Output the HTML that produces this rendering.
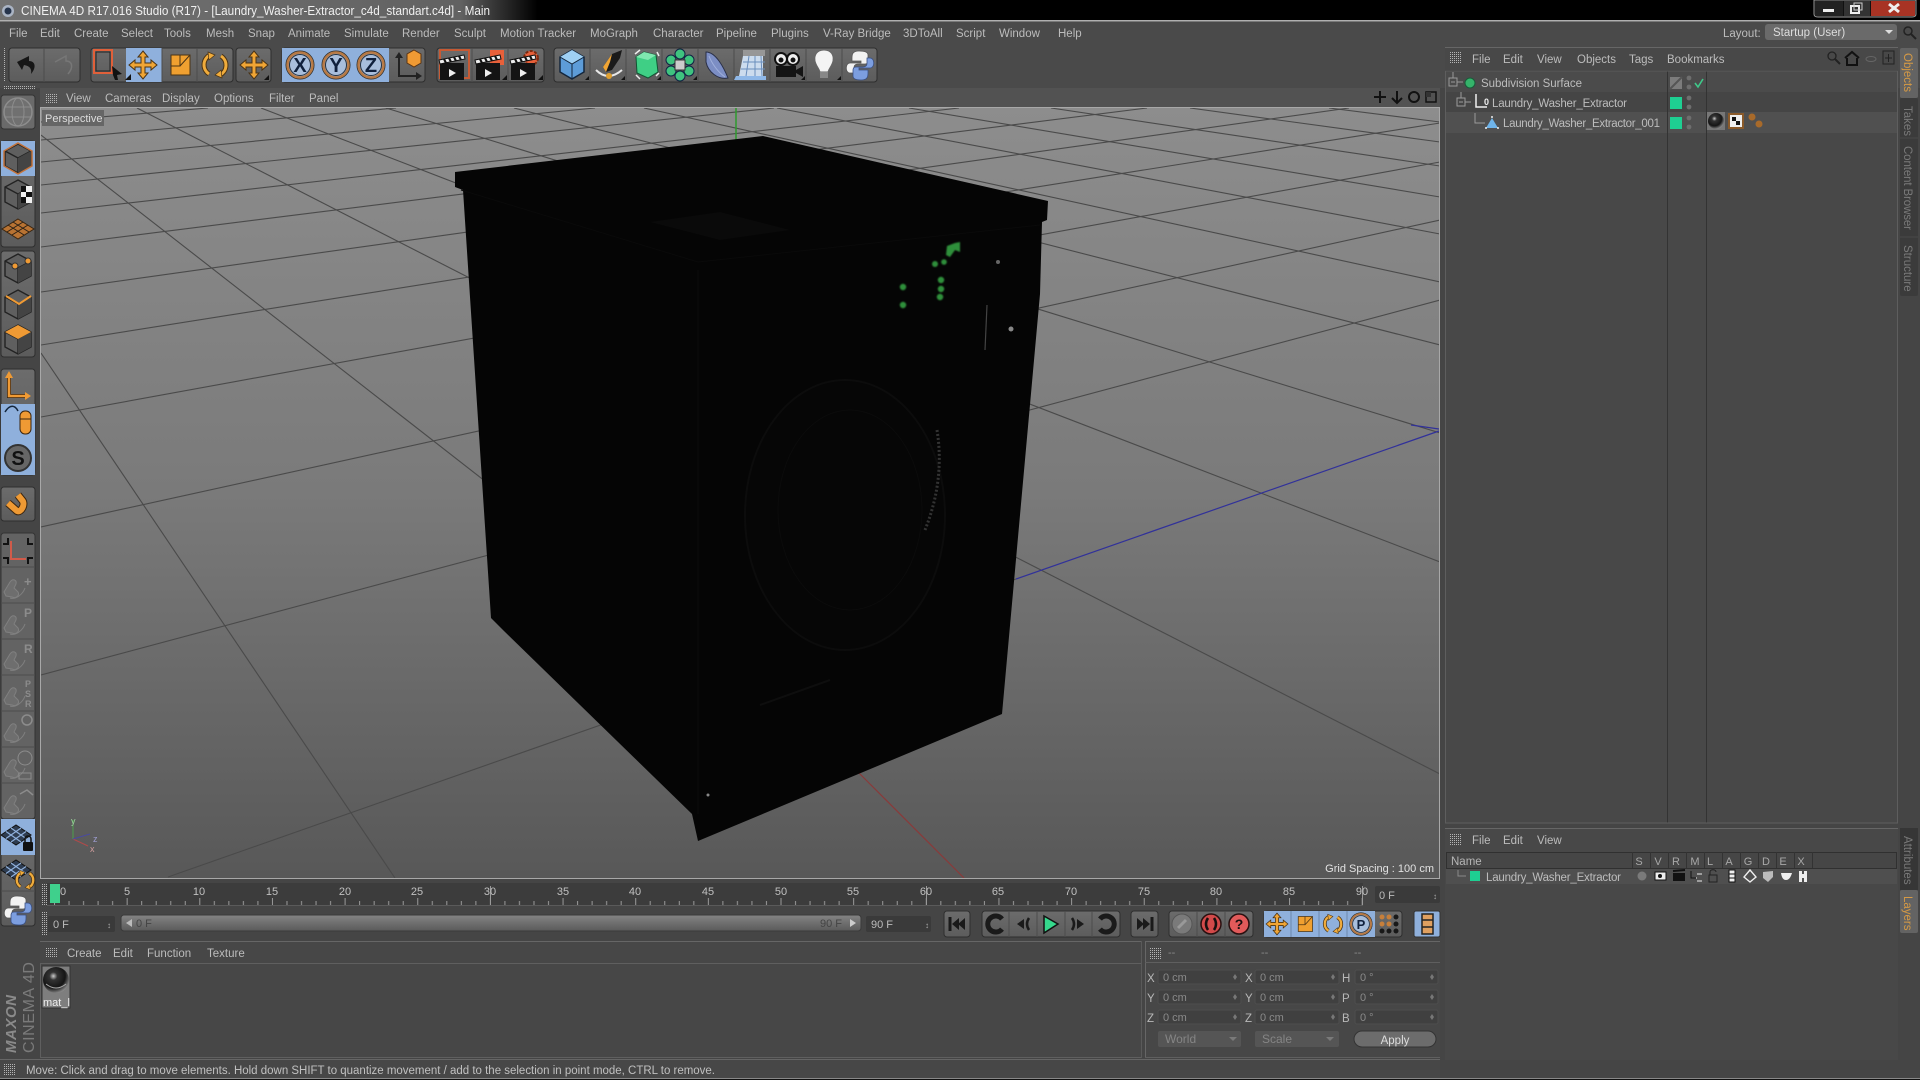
<!DOCTYPE html>
<html><head><meta charset="utf-8"><title>CINEMA 4D</title>
<style>
html,body{margin:0;padding:0;background:#454545;width:1920px;height:1080px;overflow:hidden}
svg{display:block;position:absolute;left:0;top:0;overflow:hidden}
text{font-family:"Liberation Sans",sans-serif;font-size:11px;fill:#c2c2c2}
.m text{fill:#bcbcbc;font-size:11.5px}
.d text{fill:#8a8a8a;font-size:11px}
.n text{fill:#c0c0c0;font-size:11px;text-anchor:middle}
.g line{stroke:#4a4a4a;stroke-width:1.1}
.b{fill:url(#btn);stroke:#2e2e2e;stroke-width:1}
.c{fill:#8fb0dc}
.s{stroke:#4c4c4c;stroke-width:1}
</style></head><body>
<svg width="1920" height="1080" viewBox="0 0 1920 1080" xmlns="http://www.w3.org/2000/svg">
<defs>
<linearGradient id="btn" x1="0" y1="0" x2="0" y2="1"><stop offset="0" stop-color="#6c6c6c"/><stop offset="1" stop-color="#5c5c5c"/></linearGradient>
<linearGradient id="vp" x1="0" y1="0" x2="0" y2="1"><stop offset="0" stop-color="#8d8d8d"/><stop offset=".5" stop-color="#7a7a7a"/><stop offset="1" stop-color="#585858"/></linearGradient>
<linearGradient id="ttl" x1="0" y1="0" x2="1" y2="0"><stop offset="0" stop-color="#727272"/><stop offset=".24" stop-color="#626262"/><stop offset=".255" stop-color="#3c3c3c"/><stop offset=".28" stop-color="#000"/><stop offset="1" stop-color="#000"/></linearGradient>
<linearGradient id="slid" x1="0" y1="0" x2="0" y2="1"><stop offset="0" stop-color="#848484"/><stop offset="1" stop-color="#5a5a5a"/></linearGradient>
<radialGradient id="ball" cx=".4" cy=".35" r=".7"><stop offset="0" stop-color="#ccc"/><stop offset=".22" stop-color="#333"/><stop offset=".65" stop-color="#151515"/><stop offset="1" stop-color="#999"/></radialGradient>
<filter id="soft" x="-20%" y="-20%" width="140%" height="140%"><feGaussianBlur stdDeviation=".8"/></filter>
<pattern id="grip" width="2" height="2" patternUnits="userSpaceOnUse"><rect width="1" height="1" fill="#b5b5b5"/></pattern>
<pattern id="ticks" x="54" y="880" width="72.65" height="30" patternUnits="userSpaceOnUse">
<rect x="0" y="18" width="1" height="7" fill="#9a9a9a"/><rect x="14.53" y="21" width="1" height="4" fill="#9a9a9a"/><rect x="29.06" y="21" width="1" height="4" fill="#9a9a9a"/><rect x="43.59" y="21" width="1" height="4" fill="#9a9a9a"/><rect x="58.12" y="21" width="1" height="4" fill="#9a9a9a"/></pattern>
<clipPath id="vc"><rect x="41" y="108" width="1399" height="770"/></clipPath>
<g id="mv"><polygon points="0,-14 5,-8 2,-8 2,-2 8,-2 8,-5 14,0 8,5 8,2 2,2 2,8 5,8 0,14 -5,8 -2,8 -2,2 -8,2 -8,5 -14,0 -8,-5 -8,-2 -2,-2 -2,-8 -5,-8" fill="#f0a535" stroke="#4a3315" stroke-width="1"/></g>
<g id="sc"><rect x="-9" y="-10" width="19" height="20" fill="#f0a030" stroke="#4a3315"/><path d="M-9 1H0V-10M0 1L10-10" fill="none" stroke="#4a3315"/></g>
<g id="ro"><path d="M-5-10A11 11 0 0 0-6 9M5 10A11 11 0 0 0 6-9" fill="none" stroke="#4a3315" stroke-width="5"/><path d="M-5-10A11 11 0 0 0-6 9M5 10A11 11 0 0 0 6-9" fill="none" stroke="#f0ac3c" stroke-width="3"/><path d="M-7-13L0-10-6-5ZM7 13L0 10 6 5Z" fill="#f0ac3c" stroke="#4a3315" stroke-width=".7"/></g>
<g id="ring"><circle r="14" fill="#8fb0dc" stroke="#30302e" stroke-width="1"/><circle r="12.5" fill="none" stroke="#b87a45" stroke-width="2.5"/><circle r="10.5" fill="#a8bedc" stroke="#26303c" stroke-width="1"/></g>
<g id="cube"><polygon points="0,-14 13,-7 13,8 0,15 -13,8 -13,-7" fill="#5f5f5f" stroke="#222" stroke-width="1.4"/><path d="M-13-7L0 0 13-7M0 0V15" fill="none" stroke="#222" stroke-width="1.4"/><polygon points="0,0 13,-7 13,8 0,15" fill="#444"/></g>
<g id="clap"><rect x="-12" y="-3" width="24" height="17" fill="#141414"/><path d="M-13-6L12-11 13-7-12-2Z" fill="#eee" stroke="#111"/><path d="M-8-7l2 4M-3-8l2 4M2-9l2 4M7-10l2 4" stroke="#111" stroke-width="2"/><polygon points="-3,3 4,7 -3,11" fill="#eee"/></g>
<g id="hand"><path d="M-10 6L-4-4C-1-8 3-6 2-2L0 2 4 6C6 9 2 13-2 11L-8 10Z" fill="#6e6e6e" stroke="#808080" stroke-width="1"/><path d="M-4 12C2 14 9 8 11 2" fill="none" stroke="#808080"/></g>
<g id="plane"><polygon points="-15,2 0,-8 15,2 0,12" fill="#2e3c50" stroke="#111"/><path d="M-10-1.5L5 9M-5-5L10 5.5M10-1.5L-5 9M5-5L-10 5.5" stroke="#8fb0dc" stroke-width="1.2"/></g>
<g id="py"><path d="M-1-14C-9-14-8-9-8-4H1V-2H-10C-15-2-15 8-10 8H-6V3C-6-1-3-1 0-1H5C8-1 8-3 8-5V-10C8-13 4-14-1-14Z" fill="#f2f2f2" stroke="#555" stroke-width=".8"/><path d="M1 15C9 15 8 10 8 5H-1V3H10C15 3 15-7 10-7H7V-2C7 2 4 2 1 2H-4C-7 2-7 4-7 6V11C-7 14-3 15 1 15Z" fill="#7c9ee0" stroke="#3a4f80" stroke-width=".8"/></g>
</defs>

<rect width="1920" height="1080" fill="#454545"/>

<!-- title bar -->
<rect width="1920" height="21" fill="url(#ttl)"/>
<rect y="20" width="1920" height="1.5" fill="#b0b0b0"/>
<rect y="22" width="1920" height="66" fill="#4a4a4a"/>
<circle cx="8" cy="11" r="6" fill="#aab4c4"/><circle cx="8" cy="11" r="3.5" fill="#26344c"/>
<text x="21" y="15" style="font-size:12.5px;fill:#f0f0f0" textLength="469" lengthAdjust="spacingAndGlyphs">CINEMA 4D R17.016 Studio (R17) - [Laundry_Washer-Extractor_c4d_standart.c4d] - Main</text>
<!-- window buttons -->
<path d="M1814 0V14Q1814 17 1818 17H1912Q1916 17 1916 14V0Z" fill="#111" stroke="#999"/>
<rect x="1815" y="1" width="28" height="15" fill="#222"/><rect x="1844" y="1" width="26" height="15" fill="#333"/>
<rect x="1871" y="1" width="44" height="15" fill="#a83324"/>
<rect x="1823" y="9" width="11" height="3" fill="#eee"/>
<rect x="1851" y="6" width="8" height="7" fill="none" stroke="#eee" stroke-width="2"/><rect x="1854" y="3" width="8" height="7" fill="none" stroke="#ccc" stroke-width="1"/>
<path d="M1889 4L1899 12M1899 4L1889 12" stroke="#eee" stroke-width="3"/>

<!-- main menu -->
<g class="m">
<text x="9" y="37">File</text><text x="40" y="37">Edit</text><text x="74" y="37">Create</text><text x="121" y="37">Select</text><text x="164" y="37">Tools</text><text x="206" y="37">Mesh</text><text x="248" y="37">Snap</text><text x="288" y="37">Animate</text><text x="344" y="37">Simulate</text><text x="402" y="37">Render</text><text x="454" y="37">Sculpt</text><text x="500" y="37">Motion Tracker</text><text x="590" y="37">MoGraph</text><text x="653" y="37">Character</text><text x="716" y="37">Pipeline</text><text x="771" y="37">Plugins</text><text x="823" y="37">V-Ray Bridge</text><text x="903" y="37">3DToAll</text><text x="956" y="37">Script</text><text x="999" y="37">Window</text><text x="1058" y="37">Help</text>
<text x="1723" y="37">Layout:</text>
</g>
<rect x="1765" y="24" width="132" height="16" rx="3" fill="#6a6a6a"/><text x="1773" y="36" style="font-size:11.5px;fill:#ddd">Startup (User)</text><polygon points="1885,30 1893,30 1889,34" fill="#ddd"/>
<circle cx="1908" cy="31" r="4" fill="none" stroke="#222" stroke-width="1.5"/><path d="M1911 34L1916 39" stroke="#222" stroke-width="2"/>

<!-- toolbar -->
<rect x="3" y="48" width="3" height="34" fill="url(#grip)"/>
<rect x="9" y="48" width="71" height="34" rx="3" class="b"/>
<path d="M44 48V82" class="s"/>
<path d="M17 62L29 56V61C35 61 37 67 31 74 32 69 30 66 24 65L22 70Z" fill="#161616"/>
<path d="M55 62L66 56V61C72 61 74 67 68 74" fill="none" stroke="#777" stroke-width="1.5"/>

<rect x="91" y="48" width="142" height="34" rx="3" class="b"/>
<rect x="126" y="48" width="36" height="34" class="c"/>
<path d="M162 48V82M197 48V82" class="s"/>
<rect x="94" y="50" width="18" height="23" fill="none" stroke="#e0603a" stroke-width="2"/><rect x="96" y="52" width="14" height="19" fill="none" stroke="#222"/>
<polygon points="112,66 122,74 117,75 118,80 115,80 113,75" fill="#111"/><polygon points="125,80 131,80 131,74" fill="#111"/>
<use href="#mv" x="143" y="65"/><use href="#sc" x="180" y="65"/><use href="#ro" x="215" y="65"/>
<rect x="236" y="48" width="35" height="34" rx="3" class="b"/><use href="#mv" x="254" y="65"/><polygon points="264,80 269,80 269,75" fill="#111"/>

<rect x="282" y="48" width="143" height="34" rx="3" class="b"/>
<rect x="282" y="48" width="107" height="34" class="c"/>
<use href="#ring" x="300" y="65"/><use href="#ring" x="336" y="65"/><use href="#ring" x="371" y="65"/>
<text x="300" y="72" text-anchor="middle" style="font-size:20px;font-weight:bold;fill:#10203c">X</text>
<text x="336" y="72" text-anchor="middle" style="font-size:20px;font-weight:bold;fill:#10203c">Y</text>
<text x="371" y="72" text-anchor="middle" style="font-size:20px;font-weight:bold;fill:#10203c">Z</text>
<path d="M399 56V76H418" fill="none" stroke="#222" stroke-width="2"/><polygon points="399,52 395,58 403,58" fill="#222"/><polygon points="422,76 416,72 416,80" fill="#222"/>
<polygon points="414,50 421,54 421,63 414,67 407,63 407,54" fill="#ef9a34" stroke="#5a3515"/>

<rect x="437" y="48" width="107" height="34" rx="3" class="b"/>
<path d="M472 48V82M508 48V82" class="s"/>
<rect x="440" y="50" width="29" height="28" fill="none" stroke="#c75a34" stroke-width="2"/>
<use href="#clap" x="452" y="66"/>
<rect x="490" y="50" width="14" height="15" fill="#e8603a"/><use href="#clap" x="488" y="66"/>
<circle cx="531" cy="58" r="7" fill="#e8603a" stroke="#7a2a10" stroke-width="2" stroke-dasharray="3 1.5"/><use href="#clap" x="523" y="66"/>
<polygon points="502,80 507,80 507,75" fill="#111"/><polygon points="538,80 543,80 543,75" fill="#111"/>

<rect x="554" y="48" width="323" height="34" rx="3" class="b"/>
<path d="M590 48V82M626 48V82M662 48V82M698 48V82M734 48V82M770 48V82M806 48V82M842 48V82" class="s"/>
<polygon points="572,50 584,57 584,72 572,79 560,72 560,57" fill="#5d9cd8" stroke="#14263c" stroke-width="1.5"/><polygon points="572,50 584,57 572,64 560,57" fill="#9fd0f4"/><path d="M560 57L572 64 584 57M572 64V79" fill="none" stroke="#14263c"/>
<polygon points="622,50 612,54 603,67 606,72 612,70 620,58" fill="#1a1a1a"/><polygon points="612,54 603,67 606,72 610,62" fill="#f0a535"/><path d="M596 70Q608 82 622 70" fill="none" stroke="#e8e8e8" stroke-width="2"/><circle cx="609" cy="76" r="3" fill="#e0a030"/>
<polygon points="644,52 656,55 658,72 648,78 637,73 636,57" fill="#3fcf85" stroke="#153"/><polygon points="644,52 656,55 648,60 636,57" fill="#7fe8b0"/><path d="M640 50l-5 4M657 52l2 4M636 75l4 4M656 76l3-3" stroke="#eee" stroke-width="1.5"/>
<g fill="#3fc37f" stroke="#124"><circle cx="680" cy="54" r="5"/><circle cx="671" cy="60" r="5"/><circle cx="689" cy="60" r="5"/><circle cx="671" cy="71" r="5"/><circle cx="689" cy="71" r="5"/><circle cx="680" cy="76" r="5"/></g><rect x="675" y="60" width="10" height="10" fill="#ccc" stroke="#333"/>
<path d="M706 52C716 52 724 68 728 78 718 80 708 72 706 62Z" fill="#7c8ec4" stroke="#2a3048"/><path d="M709 56C712 64 718 72 725 77" fill="none" stroke="#a0b0dc"/>
<polygon points="743,56 763,56 763,76 739,76" fill="#ccdcee"/><polygon points="736,76 766,76 766,80 734,80" fill="#8fb8e8"/><rect x="743" y="50" width="22" height="6" fill="#ddd" opacity=".4"/><path d="M743 62H765M741 69H765M749 56L746 76M755 56V76M761 56L762 76" stroke="#6a8ebc"/>
<circle cx="781" cy="59" r="6" fill="#eee" stroke="#111" stroke-width="2"/><circle cx="793" cy="59" r="6" fill="#eee" stroke="#111" stroke-width="2"/><circle cx="781" cy="60" r="2.5" fill="#111"/><circle cx="793" cy="60" r="2.5" fill="#111"/><rect x="776" y="66" width="20" height="11" fill="#141414"/><polygon points="796,70 803,66 803,77 796,73" fill="#141414"/>
<path d="M824 50C817 50 814 55 815 61 816 66 819 68 820 72H828C829 68 832 66 833 61 834 55 831 50 824 50Z" fill="#f4f4f4" stroke="#666"/><rect x="820" y="72" width="8" height="6" fill="#888"/>
<use href="#py" x="860" y="65"/>
<polygon points="585,80 589,80 589,76" fill="#111"/><polygon points="621,80 625,80 625,76" fill="#111"/><polygon points="657,80 661,80 661,76" fill="#111"/><polygon points="693,80 697,80 697,76" fill="#111"/><polygon points="801,80 805,80 805,76" fill="#111"/><polygon points="837,80 841,80 841,76" fill="#111"/>

<!-- left column globe -->
<rect x="1" y="95" width="34" height="34" rx="3" fill="#6a6a6a" stroke="#333"/>
<circle cx="18" cy="112" r="14" fill="#707070" stroke="#8d8d8d" stroke-width="1.5"/><ellipse cx="18" cy="112" rx="6" ry="14" fill="none" stroke="#8d8d8d"/><path d="M5 107H31M5 117H31" stroke="#8d8d8d"/>
<rect x="3" y="86" width="32" height="4" fill="url(#grip)"/>

<!-- viewport -->
<rect x="40" y="88" width="1400" height="20" fill="#525252"/>
<rect x="46" y="93" width="12" height="11" fill="url(#grip)"/>
<g class="m"><text x="66" y="102">View</text><text x="105" y="102">Cameras</text><text x="162" y="102">Display</text><text x="214" y="102">Options</text><text x="269" y="102">Filter</text><text x="309" y="102">Panel</text></g>
<path d="M1380 91V103M1374 97H1386" stroke="#111" stroke-width="2"/>
<path d="M1397 91V102M1392 98L1397 103 1402 98" stroke="#111" stroke-width="2" fill="none"/>
<circle cx="1414" cy="97" r="5" fill="none" stroke="#111" stroke-width="2"/>
<rect x="1426" y="92" width="10" height="10" fill="none" stroke="#111" stroke-width="1.5"/><rect x="1426" y="92" width="5" height="5" fill="#333"/>
<rect x="41" y="108" width="1399" height="770" fill="url(#vp)"/>
<g clip-path="url(#vc)">
<g class="g">
<line x1="41" y1="353" x2="395" y2="878"/>
<line x1="41" y1="135" x2="857" y2="771"/>
<line x1="137" y1="108" x2="1440" y2="774"/>
<line x1="261" y1="108" x2="1440" y2="562"/>
<line x1="386" y1="108" x2="1440" y2="433"/>
<line x1="514" y1="108" x2="1440" y2="345"/>
<line x1="644" y1="108" x2="1440" y2="282"/>
<line x1="777" y1="108" x2="1440" y2="234"/>
<line x1="909" y1="108" x2="1440" y2="197"/>
<line x1="1051" y1="108" x2="1440" y2="166"/>
<line x1="1190" y1="108" x2="1440" y2="142"/>
<line x1="1329" y1="108" x2="1440" y2="122"/>
<line x1="41" y1="122" x2="208" y2="108"/>
<line x1="41" y1="140" x2="396" y2="108"/>
<line x1="41" y1="162" x2="595" y2="108"/>
<line x1="41" y1="185" x2="774" y2="108"/>
<line x1="41" y1="213" x2="959" y2="108"/>
<line x1="41" y1="247" x2="1147" y2="108"/>
<line x1="41" y1="292" x2="1349" y2="108"/>
<line x1="41" y1="345" x2="1440" y2="123"/>
<line x1="41" y1="417" x2="1440" y2="162"/>
<line x1="41" y1="527" x2="1440" y2="220"/>
<line x1="41" y1="675" x2="1440" y2="300"/>
<line x1="168" y1="877" x2="1016" y2="579"/>
</g>
<path d="M1016 579L1439 431M1411 425L1439 429" stroke="#31319a" stroke-width="1.2" fill="none"/>
<path d="M857 771L964 878" stroke="#8a3a3a" stroke-width="1.2"/>
<path d="M736 108V184" stroke="#2f9a2f" stroke-width="1.5"/>
<!-- washer -->
<polygon points="455,172 763,136 1048,201 1047,220 1042,222 1040,294 1002,714 698,841 692,814 504,631 491,618 463,190 455,187" fill="#050505"/>
<polygon points="650,222 720,212 790,230 720,240" fill="#0a0a0a"/>
<path d="M698 270V814M461 190L698 262 1040 225" stroke="#0a0a0a" fill="none"/>
<ellipse cx="845" cy="515" rx="100" ry="135" fill="#060606" stroke="#0c0c0c" stroke-width="2"/>
<ellipse cx="850" cy="510" rx="72" ry="100" fill="none" stroke="#0b0b0b"/>
<path d="M937 430Q945 480 925 530" stroke="#333" stroke-width="3" stroke-dasharray="2 2" fill="none"/>
<path d="M760 705L830 680" stroke="#0e0e0e" stroke-width="2"/>
<g fill="#2f8f3a" filter="url(#soft)"><path d="M947 246L955 243 960 242 960 252 955 250 950 257 946 255Z"/><circle cx="935" cy="264" r="3"/><circle cx="944" cy="262" r="2.8"/><circle cx="941" cy="280" r="3.2"/><circle cx="941" cy="289" r="3.2"/><circle cx="940" cy="297" r="3.2"/><circle cx="903" cy="287" r="3.2"/><circle cx="903" cy="305" r="3.2"/></g>
<circle cx="998" cy="262" r="2" fill="#666"/><circle cx="1011" cy="329" r="2.5" fill="#888"/><path d="M987 305L985 350" stroke="#444" stroke-width="1.2"/><circle cx="708" cy="795" r="1.5" fill="#888"/>
<!-- gizmo -->
<path d="M73 839V820" stroke="#4ba04b"/><path d="M73 839L88 846" stroke="#b04a4a"/><path d="M73 839L90 834" stroke="#4a4aa0"/>
<text x="71" y="824" style="font-size:9px;fill:#9ccf9c">y</text><text x="90" y="852" style="font-size:9px;fill:#cf9c9c">x</text><text x="93" y="842" style="font-size:9px;fill:#9c9ccf">z</text>
</g>
<rect x="40.5" y="107.5" width="1399" height="771" fill="none" stroke="#a8a8a8"/>
<rect x="42" y="110" width="62" height="16" fill="#666"/><text x="45" y="122" style="font-size:11px;fill:#ddd">Perspective</text>
<text x="1434" y="872" text-anchor="end" style="font-size:11px;fill:#e2e2e2">Grid Spacing : 100 cm</text>

<!-- left toolbar -->
<rect x="1" y="141" width="34" height="106" rx="3" class="b"/><rect x="1" y="141" width="34" height="35" class="c"/>
<use href="#cube" x="18" y="158"/><polygon points="18,143 32,151 32,166 18,174 4,166 4,151" fill="none" stroke="#c4733a" stroke-width="1.5"/>
<use href="#cube" x="18" y="194"/><rect x="21" y="186" width="11" height="17" fill="#f2f2f2"/><path d="M21 186h5v6h-5zM26 192h6v5h-6zM21 197h5v6h-5z" fill="#111"/>
<polygon points="18,219 34,229 18,239 2,229" fill="#b87333" stroke="#3a2510"/><path d="M8 225L24 235M13 222L29 232M28 225L12 235M23 222L7 232" stroke="#2a2015"/>
<rect x="1" y="251" width="34" height="106" rx="3" class="b"/>
<use href="#cube" x="18" y="268"/><circle cx="15" cy="266" r="3" fill="#ef9a34" stroke="#333"/><circle cx="28" cy="261" r="3" fill="#ef9a34" stroke="#333"/>
<use href="#cube" x="18" y="304"/><path d="M6 296L19 304 31 296" stroke="#ef9a34" stroke-width="2" fill="none"/>
<use href="#cube" x="18" y="339"/><polygon points="18,325 31,332 18,339 5,332" fill="#ef9a34"/>
<rect x="1" y="369" width="34" height="106" rx="3" class="b"/><rect x="1" y="404" width="34" height="71" class="c"/>
<path d="M9 376V396H28" fill="none" stroke="#3a2510" stroke-width="4"/><path d="M9 376V396H28" fill="none" stroke="#ef9a34" stroke-width="2.5"/><polygon points="9,371 5,378 13,378" fill="#ef9a34"/><polygon points="31,396 25,392 25,400" fill="#ef9a34"/>
<path d="M5 412C10 404 15 405 18 411" fill="none" stroke="#14263c" stroke-width="1.5"/><rect x="20" y="411" width="11" height="23" rx="5" fill="#ef9a34" stroke="#3a2510"/><path d="M20 419H31" stroke="#3a2510"/>
<circle cx="18" cy="458" r="13" fill="#666" stroke="#333" stroke-width="2"/><text x="18" y="465" text-anchor="middle" style="font-size:20px;font-weight:bold;fill:#111">S</text>
<rect x="1" y="487" width="34" height="34" rx="3" class="b"/>
<path d="M8 503L17 511C21 513 26 504 22 500L18 495" fill="none" stroke="#3a2510" stroke-width="8"/><path d="M8 503L17 511C21 513 26 504 22 500L18 495" fill="none" stroke="#ef9a34" stroke-width="6"/>
<rect x="1" y="533" width="34" height="286" rx="3" fill="#636363" stroke="#333"/>
<path d="M8 538V544H3M28 538V544H33M3 558H8V564M33 558H28V564" stroke="#111" stroke-width="2" fill="none"/>
<path d="M11 541V559H26" fill="none" stroke="#d05b4a" stroke-width="2"/>
<path d="M1 567H35M1 603H35M1 639H35M1 675H35M1 711H35M1 747H35M1 783H35" class="s"/>
<use href="#hand" x="14" y="586"/><use href="#hand" x="14" y="622"/><use href="#hand" x="14" y="658"/><use href="#hand" x="14" y="694"/><use href="#hand" x="14" y="730"/><use href="#hand" x="14" y="766"/><use href="#hand" x="14" y="802"/>
<text x="24" y="586" style="font-size:13px;fill:#8c8c8c;font-weight:bold">+</text><text x="24" y="617" style="font-size:12px;fill:#8c8c8c;font-weight:bold">P</text><text x="24" y="653" style="font-size:12px;fill:#8c8c8c;font-weight:bold">R</text><text x="25" y="687" style="font-size:9px;fill:#8c8c8c;font-weight:bold">P</text><text x="25" y="697" style="font-size:9px;fill:#8c8c8c;font-weight:bold">S</text><text x="25" y="707" style="font-size:9px;fill:#8c8c8c;font-weight:bold">R</text>
<circle cx="27" cy="720" r="5" fill="none" stroke="#8c8c8c" stroke-width="1.5"/>
<circle cx="25" cy="758" r="7" fill="none" stroke="#8c8c8c"/><rect x="19" y="773" width="12" height="6" fill="none" stroke="#8c8c8c"/>
<path d="M20 794L27 790 33 795" fill="none" stroke="#8c8c8c" stroke-width="1.5"/>
<rect x="1" y="819" width="34" height="107" rx="3" class="b"/><rect x="1" y="819" width="34" height="36" class="c"/>
<use href="#plane" x="16" y="833"/><rect x="23" y="842" width="10" height="9" rx="1" fill="#111"/><path d="M25 842V839C25 835 31 835 31 839V842" fill="none" stroke="#111" stroke-width="1.5"/>
<use href="#plane" x="16" y="868"/><g transform="translate(25 880) scale(.75)"><use href="#ro"/></g>
<use href="#py" x="18" y="910"/>
<path d="M1 891H35" class="s"/>

<!-- logo -->
<text transform="translate(16 1053) rotate(-90)" style="font-size:15px;font-weight:bold;font-style:italic;fill:#8a8a8a" textLength="58">MAXON</text>
<text transform="translate(34 1053) rotate(-90)" style="font-size:16px;fill:#7a7a7a" textLength="91">CINEMA 4D</text>

<!-- timeline -->
<rect x="40" y="880" width="1400" height="60" fill="#454545"/>
<rect x="41" y="884" width="6" height="22" fill="url(#grip)"/>
<rect x="47" y="883" width="1316" height="23" fill="#3c3c3c"/>
<rect x="47" y="905" width="1316" height="1" fill="#5a5a5a"/>
<rect x="47" y="880" width="1316" height="26" fill="url(#ticks)"/>
<path d="M490.500 886V905M926.500 886V905M1362.500 886V905" stroke="#9a9a9a"/>
<rect x="50" y="884" width="10" height="19" fill="#3fd08c"/>
<g class="n"><text x="63" y="895">0</text><text x="127" y="895">5</text><text x="199" y="895">10</text><text x="272" y="895">15</text><text x="345" y="895">20</text><text x="417" y="895">25</text><text x="490" y="895">30</text><text x="563" y="895">35</text><text x="635" y="895">40</text><text x="708" y="895">45</text><text x="781" y="895">50</text><text x="853" y="895">55</text><text x="926" y="895">60</text><text x="998" y="895">65</text><text x="1071" y="895">70</text><text x="1144" y="895">75</text><text x="1216" y="895">80</text><text x="1289" y="895">85</text><text x="1362" y="895">90</text></g>
<rect x="1375" y="886" width="65" height="17" rx="2" fill="#3a3a3a"/><text x="1379" y="899" style="fill:#bbb">0 F</text><text x="1433" y="899" style="font-size:8px;fill:#aaa">&#8597;</text>
<rect x="41" y="912" width="6" height="24" fill="url(#grip)"/>
<rect x="48" y="916" width="67" height="16" rx="2" fill="#3a3a3a"/><text x="53" y="928" style="fill:#bbb">0 F</text><text x="107" y="928" style="font-size:8px;fill:#aaa">&#8597;</text>
<rect x="121" y="915" width="740" height="16" rx="3" fill="url(#slid)" stroke="#3a3a3a"/>
<polygon points="126,923 132,919 132,927" fill="#bbb"/><text x="136" y="927" style="fill:#444">0 F</text><text x="820" y="927" style="fill:#444">90 F</text><polygon points="856,923 850,919 850,927" fill="#ccc"/>
<rect x="866" y="916" width="65" height="16" rx="2" fill="#3a3a3a"/><text x="871" y="928" style="fill:#bbb">90 F</text><text x="925" y="928" style="font-size:8px;fill:#aaa">&#8597;</text>

<!-- playback -->
<rect x="944" y="911" width="26" height="26" rx="3" class="b"/><path d="M950 917V931" stroke="#1a1a1a" stroke-width="3"/><polygon points="952,924 959,918 959,930" fill="#1a1a1a"/><polygon points="958,924 965,918 965,930" fill="#1a1a1a"/>
<rect x="982" y="911" width="138" height="26" rx="3" class="b"/><path d="M1009 911V937M1037 911V937M1065 911V937M1092 911V937" class="s"/>
<path d="M1002 919A8 8 0 1 0 1002 929" fill="none" stroke="#1a1a1a" stroke-width="5"/>
<polygon points="1017,924 1024,919 1024,929" fill="#1a1a1a"/><path d="M1029 918Q1025 924 1029 930" stroke="#1a1a1a" stroke-width="2.5" fill="none"/>
<polygon points="1044,916 1058,924 1044,933" fill="#35d88c" stroke="#111" stroke-width="1.5"/>
<path d="M1072 918Q1076 924 1072 930" stroke="#1a1a1a" stroke-width="2.5" fill="none"/><polygon points="1084,924 1077,919 1077,929" fill="#1a1a1a"/>
<path d="M1100 919A8 8 0 1 1 1100 929" fill="none" stroke="#1a1a1a" stroke-width="5"/>
<rect x="1131" y="911" width="27" height="26" rx="3" class="b"/><polygon points="1137,918 1144,924 1137,930" fill="#1a1a1a"/><polygon points="1143,918 1150,924 1143,930" fill="#1a1a1a"/><path d="M1152 917V931" stroke="#1a1a1a" stroke-width="3"/>
<rect x="1169" y="911" width="84" height="26" rx="3" class="b"/><path d="M1197 911V937M1225 911V937" class="s"/>
<circle cx="1182" cy="924" r="10" fill="#7a7a7a" stroke="#555"/><path d="M1178 928L1186 920" stroke="#999" stroke-width="3"/>
<circle cx="1211" cy="924" r="10" fill="#d34a4a" stroke="#2a1010" stroke-width="1.5"/><path d="M1208 918Q1204 924 1208 930M1214 918Q1218 924 1214 930" stroke="#1a1010" stroke-width="2.5" fill="none"/>
<circle cx="1239" cy="924" r="10" fill="#e25a5a" stroke="#2a1010" stroke-width="1.5"/><text x="1239" y="929" text-anchor="middle" style="font-size:14px;font-weight:bold;fill:#1a1010">?</text>
<rect x="1264" y="911" width="138" height="26" rx="3" class="b"/><rect x="1264" y="911" width="111" height="26" class="c"/>
<path d="M1291 911V937M1319 911V937M1347 911V937" stroke="#6e88ab"/>
<g transform="translate(1277 924) scale(.78)"><use href="#mv"/></g><g transform="translate(1305 924) scale(.75)"><use href="#sc"/></g><g transform="translate(1333 924) scale(.75)"><use href="#ro"/></g>
<g transform="translate(1361 924) scale(.8)"><use href="#ring"/></g><text x="1361" y="929" text-anchor="middle" style="font-size:13px;font-weight:bold;fill:#10203c">P</text>
<g fill="#c77f3a"><circle cx="1382" cy="917" r="2.5"/><circle cx="1389" cy="917" r="2.5"/><circle cx="1382" cy="924" r="2.5"/><circle cx="1389" cy="924" r="2.5"/></g><g fill="#181818"><circle cx="1396" cy="917" r="2.5"/><circle cx="1396" cy="924" r="2.5"/><circle cx="1382" cy="931" r="2.5"/><circle cx="1389" cy="931" r="2.5"/><circle cx="1396" cy="931" r="2.5"/></g>
<rect x="1414" y="911" width="26" height="26" rx="2" fill="#8fb0dc" stroke="#333"/><rect x="1422" y="914" width="11" height="20" fill="#e0a060" stroke="#222" stroke-width="1.5"/><path d="M1422 920H1433M1422 927H1433" stroke="#222" stroke-width="1.5"/>

<!-- material manager -->
<rect x="40" y="941" width="1101" height="117" fill="#474747"/>
<rect x="40" y="941" width="1101" height="1" fill="#666"/>
<rect x="40" y="963" width="1101" height="1" fill="#5f5f5f"/>
<rect x="40" y="963" width="1" height="95" fill="#5f5f5f"/><rect x="1141" y="941" width="1" height="117" fill="#5a5a5a"/><rect x="40" y="1057" width="1101" height="1" fill="#5f5f5f"/>
<rect x="46" y="947" width="11" height="11" fill="url(#grip)"/>
<g class="m"><text x="67" y="957">Create</text><text x="113" y="957">Edit</text><text x="147" y="957">Function</text><text x="207" y="957">Texture</text></g>
<rect x="42" y="966" width="28" height="42" fill="#7e7e7e" stroke="#333"/><circle cx="56" cy="980" r="13" fill="url(#ball)"/><path d="M46 984Q56 992 66 984" stroke="#aaa" fill="none"/><text x="43" y="1006" style="font-size:11px;fill:#eee">mat_l</text>

<!-- coordinates -->
<rect x="1145" y="941" width="295" height="117" fill="#474747"/>
<rect x="1145" y="941" width="1" height="117" fill="#666"/><rect x="1145" y="941" width="295" height="1" fill="#666"/><rect x="1145" y="962" width="295" height="1" fill="#5f5f5f"/><rect x="1145" y="1057" width="295" height="1" fill="#5f5f5f"/>
<rect x="1149" y="947" width="12" height="12" fill="url(#grip)"/>
<g class="d"><text x="1168" y="956">--</text><text x="1261" y="956">--</text><text x="1354" y="956">--</text></g>
<g fill="#404040" stroke="#4e4e4e"><rect x="1158" y="970" width="83" height="14" rx="2"/><rect x="1255" y="970" width="84" height="14" rx="2"/><rect x="1355" y="970" width="83" height="14" rx="2"/><rect x="1158" y="990" width="83" height="14" rx="2"/><rect x="1255" y="990" width="84" height="14" rx="2"/><rect x="1355" y="990" width="83" height="14" rx="2"/><rect x="1158" y="1010" width="83" height="14" rx="2"/><rect x="1255" y="1010" width="84" height="14" rx="2"/><rect x="1355" y="1010" width="83" height="14" rx="2"/></g>
<text x="1147" y="982" style="fill:#b8b8b8;font-size:11.5px">X</text><text x="1245" y="982" style="fill:#b8b8b8;font-size:11.5px">X</text><text x="1342" y="982" style="fill:#b8b8b8;font-size:11.5px">H</text><text x="1147" y="1002" style="fill:#b8b8b8;font-size:11.5px">Y</text><text x="1245" y="1002" style="fill:#b8b8b8;font-size:11.5px">Y</text><text x="1342" y="1002" style="fill:#b8b8b8;font-size:11.5px">P</text><text x="1147" y="1022" style="fill:#b8b8b8;font-size:11.5px">Z</text><text x="1245" y="1022" style="fill:#b8b8b8;font-size:11.5px">Z</text><text x="1342" y="1022" style="fill:#b8b8b8;font-size:11.5px">B</text>
<g class="d"><text x="1163" y="981">0 cm</text><text x="1260" y="981">0 cm</text><text x="1360" y="981">0 °</text><text x="1163" y="1001">0 cm</text><text x="1260" y="1001">0 cm</text><text x="1360" y="1001">0 °</text><text x="1163" y="1021">0 cm</text><text x="1260" y="1021">0 cm</text><text x="1360" y="1021">0 °</text></g>
<g fill="#777"><path d="M1235 974l-2 3h4zM1235 980l-2-3h4zM1333 974l-2 3h4zM1333 980l-2-3h4zM1432 974l-2 3h4zM1432 980l-2-3h4zM1235 994l-2 3h4zM1235 1000l-2-3h4zM1333 994l-2 3h4zM1333 1000l-2-3h4zM1432 994l-2 3h4zM1432 1000l-2-3h4zM1235 1014l-2 3h4zM1235 1020l-2-3h4zM1333 1014l-2 3h4zM1333 1020l-2-3h4zM1432 1014l-2 3h4zM1432 1020l-2-3h4z"/></g>
<rect x="1158" y="1031" width="83" height="16" rx="2" fill="#555"/><text x="1165" y="1043" style="font-size:12px;fill:#858585">World</text><polygon points="1229,1037 1237,1037 1233,1041" fill="#7a7a7a"/>
<rect x="1255" y="1031" width="84" height="16" rx="2" fill="#555"/><text x="1262" y="1043" style="font-size:12px;fill:#858585">Scale</text><polygon points="1326,1037 1334,1037 1330,1041" fill="#7a7a7a"/>
<rect x="1354" y="1031" width="82" height="16" rx="8" fill="#6c6c6c" stroke="#333"/><text x="1395" y="1044" text-anchor="middle" style="font-size:11.5px;fill:#ddd">Apply</text>

<!-- status -->
<rect x="0" y="1059" width="1440" height="1" fill="#666"/>
<rect x="0" y="1060" width="1440" height="18" fill="#474747"/>
<rect x="4" y="1063" width="12" height="13" fill="url(#grip)"/>
<text x="26" y="1074" style="font-size:11.5px;fill:#c0c0c0" textLength="689" lengthAdjust="spacingAndGlyphs">Move: Click and drag to move elements. Hold down SHIFT to quantize movement / add to the selection in point mode, CTRL to remove.</text>

<!-- object manager -->
<rect x="1445" y="47" width="453" height="776" fill="#484848"/>
<rect x="1445" y="47" width="453" height="1" fill="#666"/>
<rect x="1445" y="70" width="453" height="1" fill="#3a3a3a"/>
<rect x="1450" y="52" width="12" height="12" fill="url(#grip)"/>
<g class="m"><text x="1472" y="63">File</text><text x="1503" y="63">Edit</text><text x="1537" y="63">View</text><text x="1577" y="63">Objects</text><text x="1629" y="63">Tags</text><text x="1667" y="63">Bookmarks</text></g>
<circle cx="1832" cy="56" r="4" fill="none" stroke="#222" stroke-width="1.3"/><path d="M1835 59L1840 64" stroke="#222" stroke-width="2"/>
<path d="M1845 58L1852 52 1859 58M1847 58V65H1857V58" fill="none" stroke="#111" stroke-width="2"/>
<ellipse cx="1871" cy="59" rx="5" ry="2.5" fill="none" stroke="#666"/>
<rect x="1883" y="51" width="11" height="13" fill="none" stroke="#222"/><path d="M1885 58H1892M1888.500 54V62" stroke="#222"/>
<rect x="1446" y="72" width="451" height="20" fill="#4b4b4b"/>
<rect x="1446" y="92" width="451" height="20" fill="#454545"/>
<rect x="1446" y="112" width="451" height="21" fill="#505050"/>
<path d="M1667.500 71V823M1706.500 71V823" stroke="#333"/>
<rect x="1445.500" y="71" width="452" height="752" fill="none" stroke="#5e5e5e"/>
<path d="M1453 72V78M1449 78h8v8h-8zM1451 82h4M1457 82H1463M1461 92V98M1465 98h-8v8h8zM1459 102h4M1465 102H1471M1475 113V123H1485" fill="none" stroke="#9a9a9a"/>
<circle cx="1470" cy="83" r="5" fill="#35b36a" stroke="#1a5a3a"/>
<path d="M1476 94V107H1487" stroke="#eee" stroke-width="1.5" fill="none"/><text x="1484" y="105" style="font-size:9px;font-weight:bold;fill:#eee">0</text>
<polygon points="1492,118 1498,128 1486,128" fill="#6fb4ea"/><circle cx="1486" cy="128" r="1" fill="#eee"/><circle cx="1498" cy="128" r="1" fill="#eee"/><circle cx="1492" cy="117" r="1" fill="#eee"/>
<text x="1481" y="87" style="font-size:11.5px;fill:#bdbdbd" textLength="101">Subdivision Surface</text>
<text x="1492" y="107" style="font-size:11.5px;fill:#bdbdbd" textLength="135">Laundry_Washer_Extractor</text>
<text x="1503" y="127" style="font-size:11.5px;fill:#bdbdbd" textLength="157">Laundry_Washer_Extractor_001</text>
<rect x="1670" y="77" width="12" height="12" fill="#7c7c7c"/><path d="M1670 89L1682 77" stroke="#555" stroke-width="2"/>
<rect x="1670" y="97" width="12" height="12" fill="#1ecf92"/><rect x="1670" y="117" width="12" height="12" fill="#1ecf92"/>
<g fill="#6e6e6e"><circle cx="1689" cy="78" r="2.4"/><circle cx="1689" cy="87" r="2.4"/><circle cx="1689" cy="98" r="2.4"/><circle cx="1689" cy="107" r="2.4"/><circle cx="1689" cy="118" r="2.4"/><circle cx="1689" cy="127" r="2.4"/></g>
<path d="M1695 83L1698 87 1703 79" fill="none" stroke="#3fc98a" stroke-width="1.6"/>
<rect x="1707" y="112" width="18" height="18" fill="#777"/><circle cx="1716" cy="121" r="8" fill="url(#ball)"/>
<rect x="1729" y="114" width="14" height="14" fill="#eee" stroke="#8a5a2a" stroke-width="2"/><path d="M1732 117h4v4h-4zM1736 121h4v4h-4z" fill="#111"/>
<circle cx="1752" cy="117" r="3.5" fill="#a86a2a"/><circle cx="1759" cy="124" r="3.5" fill="#a86a2a"/>

<!-- layer manager -->
<rect x="1445" y="828" width="453" height="232" fill="#484848"/>
<rect x="1445" y="828" width="453" height="1" fill="#666"/>
<rect x="1450" y="833" width="12" height="12" fill="url(#grip)"/>
<g class="m"><text x="1472" y="844">File</text><text x="1503" y="844">Edit</text><text x="1537" y="844">View</text></g>
<rect x="1446.500" y="852.500" width="450" height="16" fill="#464646" stroke="#303030"/>
<rect x="1446" y="869" width="451" height="15" fill="#4f4f4f"/>
<path d="M1632.500 852V868M1650.500 852V868M1668.500 852V868M1686.500 852V868M1704.500 852V868M1722.500 852V868M1740.500 852V868M1758.500 852V868M1776.500 852V868M1794.500 852V868M1812.500 852V868" stroke="#333"/>
<text x="1451" y="865" style="font-size:11.5px;fill:#b5b5b5">Name</text>
<text x="1639" y="865" text-anchor="middle" style="fill:#a8a8a8">S</text><text x="1658" y="865" text-anchor="middle" style="fill:#a8a8a8">V</text><text x="1676" y="865" text-anchor="middle" style="fill:#a8a8a8">R</text><text x="1695" y="865" text-anchor="middle" style="fill:#a8a8a8">M</text><text x="1710" y="865" text-anchor="middle" style="fill:#a8a8a8">L</text><text x="1729" y="865" text-anchor="middle" style="fill:#a8a8a8">A</text><text x="1748" y="865" text-anchor="middle" style="fill:#a8a8a8">G</text><text x="1766" y="865" text-anchor="middle" style="fill:#a8a8a8">D</text><text x="1783" y="865" text-anchor="middle" style="fill:#a8a8a8">E</text><text x="1801" y="865" text-anchor="middle" style="fill:#a8a8a8">X</text>
<path d="M1458 870V876H1466" fill="none" stroke="#8a8a8a"/>
<rect x="1470" y="871" width="10" height="10" fill="#1ecf92"/>
<text x="1486" y="881" style="font-size:11.5px;fill:#bdbdbd" textLength="135">Laundry_Washer_Extractor</text>
<circle cx="1642" cy="876" r="4.500" fill="#7a7a7a"/>
<rect x="1655" y="872" width="11" height="8" fill="#eee" stroke="#111"/><circle cx="1660" cy="876" r="2" fill="#111"/>
<rect x="1673" y="873" width="12" height="8" fill="#111"/><path d="M1673 871L1685 870" stroke="#111" stroke-width="2"/>
<path d="M1691 871V878H1697M1697 874H1702M1697 881H1702" stroke="#eee" fill="none"/><path d="M1691 871V878H1696" stroke="#111" fill="none"/>
<rect x="1709" y="875" width="8" height="7" fill="none" stroke="#222"/><path d="M1710 875V872C1710 869 1716 869 1716 872" fill="none" stroke="#222"/>
<rect x="1729" y="870" width="6" height="12" fill="#eee" stroke="#111"/><path d="M1729 874H1735M1729 878H1735" stroke="#111"/>
<polygon points="1750,870 1756,877 1750,882 1744,877" fill="none" stroke="#eee" stroke-width="1.400"/>
<path d="M1763 872L1773 871V877L1768 882 1763 878Z" fill="#bbb"/>
<path d="M1781 873H1792Q1790 880 1786 880 1782 880 1781 873Z" fill="#eee"/>
<path d="M1799 871H1802V874H1804V871H1807V882H1804V878H1802V882H1799Z" fill="#eee"/>

<!-- right tabs -->
<rect x="1900" y="48" width="18" height="50" rx="2" fill="#636363"/>
<rect x="1900" y="98" width="18" height="198" rx="2" fill="#3b3b3b"/>
<path d="M1900 138H1918M1900 237H1918" stroke="#4a4a4a"/>
<rect x="1900" y="828" width="18" height="62" fill="#363636"/>
<rect x="1900" y="890" width="18" height="43" rx="2" fill="#636363"/>
<text transform="translate(1904 53) rotate(90)" style="font-size:11.500px;fill:#d69a45">Objects</text>
<text transform="translate(1904 106) rotate(90)" style="font-size:11.500px;fill:#7a7a7a">Takes</text>
<text transform="translate(1904 146) rotate(90)" style="font-size:11.500px;fill:#7a7a7a" textLength="84">Content Browser</text>
<text transform="translate(1904 245) rotate(90)" style="font-size:11.500px;fill:#7a7a7a">Structure</text>
<text transform="translate(1904 836) rotate(90)" style="font-size:11.500px;fill:#7a7a7a">Attributes</text>
<text transform="translate(1904 896) rotate(90)" style="font-size:11.500px;fill:#d69a45">Layers</text>

<!-- bottom edge -->
<rect x="0" y="1078" width="1920" height="1" fill="#888"/>
<rect x="0" y="1079" width="1920" height="1" fill="#111"/>
</svg>
</body></html>
